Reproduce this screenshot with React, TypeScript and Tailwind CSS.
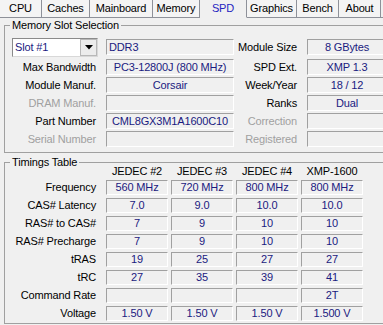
import React from "react";

const NAVY = "text-[#1a1a80]";

const tabs: [string, string, boolean][] = [
  ["CPU", "w-[42px]", false],
  ["Caches", "w-[48px]", false],
  ["Mainboard", "w-[63px]", false],
  ["Memory", "w-[47px]", false],
  ["SPD", "w-[47px]", true],
  ["Graphics", "w-[50px]", false],
  ["Bench", "w-[42px]", false],
  ["About", "w-[42px]", false],
];

function Field({ w, children, left }: { w: string; children?: React.ReactNode; left?: boolean }) {
  return (
    <div
      className={`${w} h-[16px] shrink-0 flex items-center ${left ? "justify-start pl-[2px]" : "justify-center"} border border-t-[#a0a0a0] border-l-[#a0a0a0] border-b-white border-r-white ${NAVY} whitespace-nowrap overflow-hidden`}
    >
      {children}
    </div>
  );
}

function Label({ children, gray, w }: { children: React.ReactNode; gray?: boolean; w: string }) {
  return (
    <div className={`${w} shrink-0 text-right pr-[2px] whitespace-nowrap ${gray ? "text-[#a0a0a0]" : "text-black"}`}>
      {children}
    </div>
  );
}

function SlotRow({
  l1,
  v1,
  g1,
  l2,
  v2,
  g2,
}: {
  l1: string;
  v1?: string;
  g1?: boolean;
  l2: string;
  v2?: string;
  g2?: boolean;
}) {
  return (
    <div className="h-[16px] flex items-center">
      <Label w="w-[86px]" gray={g1}>{l1}</Label>
      <div className="ml-[8px]">
        <Field w="w-[128px]">{v1}</Field>
      </div>
      <Label w="w-[65px]" gray={g2}>{l2}</Label>
      <div className="ml-[8px]">
        <Field w="w-[80px]">{v2}</Field>
      </div>
    </div>
  );
}

function Cell({ children }: { children?: React.ReactNode }) {
  return (
    <div
      className={`w-[62px] h-[15px] shrink-0 flex items-center justify-center border border-t-[#a0a0a0] border-l-[#a0a0a0] border-b-white border-r-white ${NAVY} whitespace-nowrap`}
    >
      {children}
    </div>
  );
}

function TimingRow({ label, vals }: { label: string; vals: string[] }) {
  return (
    <div className="h-[15px] flex items-center">
      <Label w="w-[86px]">{label}</Label>
      <div className="ml-[8px] flex gap-[3px]">
        {vals.map((v, i) => (
          <Cell key={i}>{v}</Cell>
        ))}
      </div>
    </div>
  );
}

export default function App() {
  return (
    <div className="w-[383px] h-[325px] overflow-hidden bg-[#f0f0f0] font-['Liberation_Sans',Arial,sans-serif] text-[11px] leading-[13px] tracking-[-0.15px] text-black">
      {/* Tabs */}
      <div className="flex h-[18px]">
        {tabs.map(([name, w, sel]) => (
          <div
            key={name}
            className={`${w} h-[18px] shrink-0 flex items-center justify-center border-r border-[#8e9199] ${
              sel ? "border-b border-b-[#f0f0f0] bg-[#f0f0f0] text-[#2424c0]" : "border-b bg-[#f4f4f4] text-black"
            }`}
          >
            {name}
          </div>
        ))}
        <div className="flex-1 h-[18px] border-b border-[#8e9199]" />
      </div>

      <div className="pl-[4px] pt-[1px]">
        {/* Memory Slot Selection */}
        <fieldset className="w-[392px] border border-[#a0a0a0] pl-[7px] pb-[5px]">
          <legend className="ml-[-2px] px-[2px]">Memory Slot Selection</legend>
          <div className="pt-[5px] flex flex-col gap-[2px]">
            <div className="h-[20px] flex items-center">
              <div className="w-[86px] h-[19px] shrink-0 flex border border-t-[#8a8a8a] border-l-[#8a8a8a] border-b-[#d8d8d8] border-r-[#d8d8d8] bg-white">
                <div className={`flex-1 pl-[2px] flex items-center ${NAVY}`}>Slot #1</div>
                <div className="w-[17px] h-full flex items-center justify-center bg-[#ececec] border border-[#b8b8b8]">
                  <svg width="8" height="5" viewBox="0 0 8 5">
                    <path d="M0 0 H8 L4 4.5 Z" fill="#000" />
                  </svg>
                </div>
              </div>
              <div className="ml-[8px]">
                <Field w="w-[128px]" left>
                  DDR3
                </Field>
              </div>
              <Label w="w-[65px]">Module Size</Label>
              <div className="ml-[8px]">
                <Field w="w-[80px]">8 GBytes</Field>
              </div>
            </div>
            <SlotRow l1="Max Bandwidth" v1="PC3-12800J (800 MHz)" l2="SPD Ext." v2="XMP 1.3" />
            <SlotRow l1="Module Manuf." v1="Corsair" l2="Week/Year" v2="18 / 12" />
            <SlotRow l1="DRAM Manuf." g1 l2="Ranks" v2="Dual" />
            <SlotRow l1="Part Number" v1="CML8GX3M1A1600C10" l2="Correction" g2 />
            <SlotRow l1="Serial Number" g1 l2="Registered" g2 />
          </div>
        </fieldset>

        {/* Timings Table */}
        <fieldset className="mt-[3px] w-[392px] border border-[#a0a0a0] pl-[7px] pb-[2px]">
          <legend className="ml-[-2px] px-[2px]">Timings Table</legend>
          <div className="mt-[-4px] h-[13px] flex items-center">
            <div className="w-[86px] shrink-0" />
            <div className="ml-[8px] flex gap-[3px]">
              {["JEDEC #2", "JEDEC #3", "JEDEC #4", "XMP-1600"].map((h) => (
                <div key={h} className="w-[62px] shrink-0 text-center whitespace-nowrap">
                  {h}
                </div>
              ))}
            </div>
          </div>
          <div className="mt-[2px] flex flex-col gap-[3px]">
            <TimingRow label="Frequency" vals={["560 MHz", "720 MHz", "800 MHz", "800 MHz"]} />
            <TimingRow label="CAS# Latency" vals={["7.0", "9.0", "10.0", "10.0"]} />
            <TimingRow label="RAS# to CAS#" vals={["7", "9", "10", "10"]} />
            <TimingRow label="RAS# Precharge" vals={["7", "9", "10", "10"]} />
            <TimingRow label="tRAS" vals={["19", "25", "27", "27"]} />
            <TimingRow label="tRC" vals={["27", "35", "39", "41"]} />
            <TimingRow label="Command Rate" vals={["", "", "", "2T"]} />
            <TimingRow label="Voltage" vals={["1.50 V", "1.50 V", "1.50 V", "1.500 V"]} />
          </div>
        </fieldset>
      </div>
    </div>
  );
}
